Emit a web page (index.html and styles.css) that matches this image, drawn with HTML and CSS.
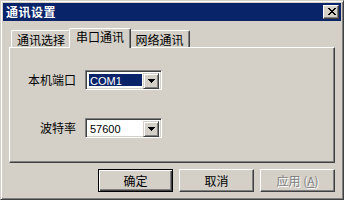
FILE: index.html
```html
<!DOCTYPE html>
<html lang="zh">
<head>
<meta charset="utf-8">
<title>通讯设置</title>
<link rel="stylesheet" href="styles.css">
</head>
<body>
<div class="window">
  <div class="titlebar">
    <span class="title">通讯设置</span>
    <span class="close"><svg width="8" height="7" viewBox="0 0 8 7" shape-rendering="crispEdges"><path fill="#000" d="M0 0h2v1H0zM6 0h2v1H6zM1 1h2v1H1zM5 1h2v1H5zM2 2h4v1H2zM3 3h2v1H3zM2 4h4v1H2zM1 5h2v1H1zM5 5h2v1H5zM0 6h2v1H0zM6 6h2v1H6z"/></svg></span>
  </div>
  <div class="content">
    <div class="tabs">
      <div class="tab tab-first">通讯选择</div>
      <div class="tab active">串口通讯</div>
      <div class="tab tab-last">网络通讯</div>
    </div>
    <div class="panel">
      <div class="form">
        <span class="label">本机端口</span>
        <div class="combo">
          <span class="value"><span class="selected">COM1</span></span>
          <span class="drop"><svg width="7" height="4" viewBox="0 0 7 4" shape-rendering="crispEdges"><path fill="#000" d="M0 0h7v1H0zM1 1h5v1H1zM2 2h3v1H2zM3 3h1v1H3z"/></svg></span>
        </div>
        <span class="label">波特率</span>
        <div class="combo">
          <span class="value"><span class="plain">57600</span></span>
          <span class="drop"><svg width="7" height="4" viewBox="0 0 7 4" shape-rendering="crispEdges"><path fill="#000" d="M0 0h7v1H0zM1 1h5v1H1zM2 2h3v1H2zM3 3h1v1H3z"/></svg></span>
        </div>
      </div>
    </div>
    <div class="buttons">
      <button class="btn default">确定</button>
      <button class="btn">取消</button>
      <button class="btn disabled">应用 (<u>A</u>)</button>
    </div>
  </div>
</div>
</body>
</html>
```
FILE: styles.css
```css
* { box-sizing: border-box; }
html, body { margin: 0; padding: 0; }
body {
  width: 344px;
  height: 200px;
  overflow: hidden;
  background: #D4D0C8;
  font-family: "Noto Sans CJK SC", "Liberation Sans", sans-serif;
  font-size: 12px;
  color: #000;
}
.window {
  width: 344px;
  height: 200px;
  background: #D4D0C8;
  border: 1px solid;
  border-color: #D4D0C8 #404040 #404040 #D4D0C8;
  box-shadow: inset 1px 1px #FFFFFF, inset -1px -1px #808080;
  padding: 2px;
  display: flex;
  flex-direction: column;
}
.titlebar {
  height: 18px;
  background: #0A246A;
  display: flex;
  align-items: center;
  justify-content: space-between;
  padding: 0 2px 0 3px;
}
.title {
  color: #fff;
  font-weight: bold;
  font-size: 12px;
  line-height: 14px;
  letter-spacing: 0.5px;
}
.close {
  width: 16px;
  height: 14px;
  background: #D4D0C8;
  border: 1px solid;
  border-color: #FFFFFF #404040 #404040 #FFFFFF;
  box-shadow: inset -1px -1px #808080;
  display: flex;
  align-items: center;
  justify-content: center;
  padding-bottom: 1px;
  padding-left: 1px;
}
.close svg { display: block; }
.content {
  flex: 1;
  display: flex;
  flex-direction: column;
  padding: 7px 6px 0 6px;
}
.tabs {
  height: 19px;
  display: flex;
  align-items: flex-end;
  padding-left: 2px;
  position: relative;
  z-index: 1;
}
.tab {
  height: 17px;
  border-top: 1px solid #FFFFFF;
  border-left: 1px solid #FFFFFF;
  border-right: 1px solid #404040;
  border-radius: 2px 2px 0 0;
  box-shadow: inset -1px 0 #808080;
  background: #D4D0C8;
  text-align: center;
  line-height: 14px;
  padding-top: 2px;
  white-space: nowrap;
}
.tab-first { width: 60px; }
.tab-last { width: 61px; }
.active {
  width: 62px;
  height: 20px;
  margin: 0 -2px -1px -2px;
  padding-top: 1px;
  position: relative;
  z-index: 2;
}
.panel {
  height: 116px;
  border: 1px solid;
  border-color: #FFFFFF #404040 #404040 #FFFFFF;
  box-shadow: inset -1px -1px #808080;
  padding-top: 22px;
}
.form {
  display: grid;
  grid-template-columns: 66px 77px;
  column-gap: 9px;
  row-gap: 28px;
  align-items: center;
}
.label {
  text-align: right;
  line-height: 14px;
}
.combo {
  height: 20px;
  background: #fff;
  border: 1px solid;
  border-color: #808080 #FFFFFF #FFFFFF #808080;
  box-shadow: inset 1px 1px #404040, inset -1px -1px #D4D0C8;
  padding: 2px;
  display: flex;
}
.value {
  flex: 1;
  padding: 1px 2px 1px 1px;
  display: flex;
}
.selected, .plain {
  flex: 1;
  font-family: "Liberation Sans", sans-serif;
  font-size: 11px;
  line-height: 14px;
  padding-left: 1px;
}
.selected {
  background: #0A246A;
  color: #fff;
}
.drop {
  width: 16px;
  height: 16px;
  background: #D4D0C8;
  border: 1px solid;
  border-color: #D4D0C8 #404040 #404040 #D4D0C8;
  box-shadow: inset 1px 1px #FFFFFF, inset -1px -1px #808080;
  display: flex;
  align-items: center;
  justify-content: center;
  margin-left: -1px;
}
.drop svg { display: block; }
.buttons {
  display: flex;
  justify-content: flex-end;
  gap: 6px;
  margin-top: 6px;
}
.btn {
  width: 75px;
  height: 23px;
  margin: 0;
  padding: 0;
  font-family: "Noto Sans CJK SC", "Liberation Sans", sans-serif;
  font-size: 12px;
  line-height: 14px;
  color: #000;
  background: #D4D0C8;
  border: 1px solid;
  border-color: #FFFFFF #404040 #404040 #FFFFFF;
  box-shadow: inset -1px -1px #808080;
}
.btn.default {
  border-color: #000;
  box-shadow: inset 1px 1px #FFFFFF, inset -1px -1px #404040, inset -2px -2px #808080;
}
.btn.disabled {
  color: #808080;
  text-shadow: 1px 1px 0 #FFFFFF;
}
.btn u { text-decoration: underline; }
```
